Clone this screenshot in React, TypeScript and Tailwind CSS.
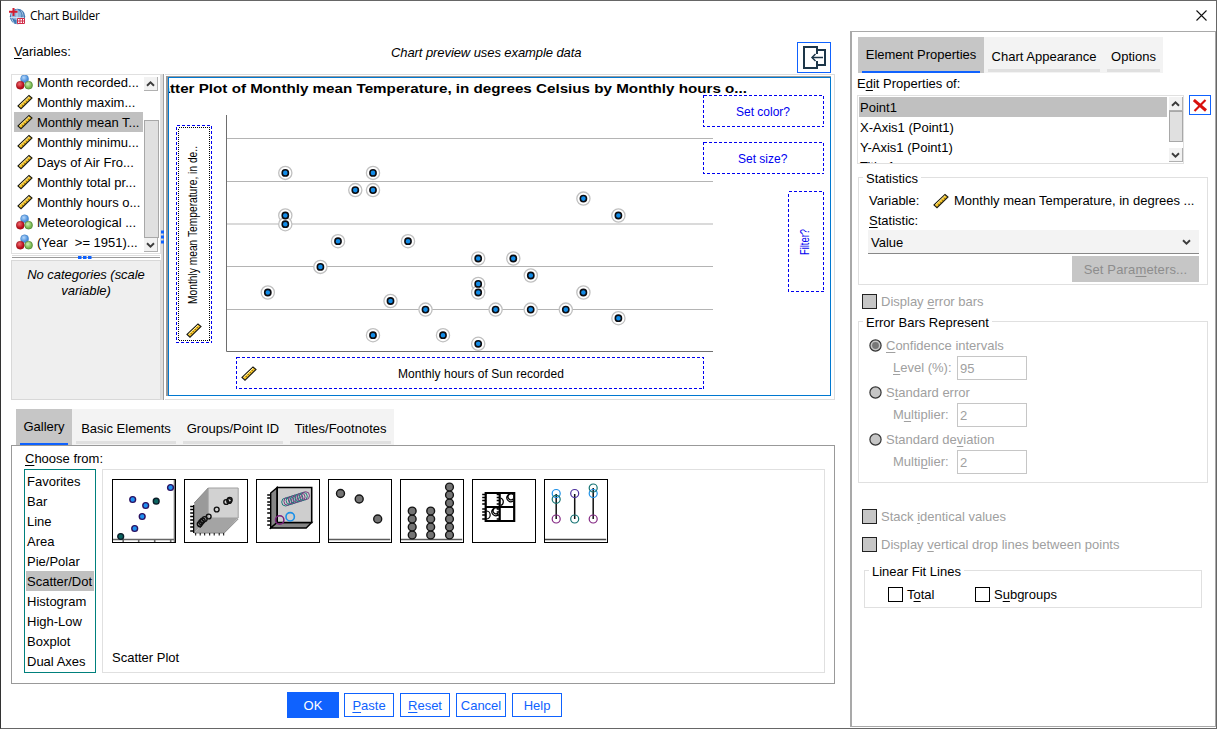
import React from "react";

const U = ({ children }: { children: React.ReactNode }) => (
  <span className="underline decoration-1 underline-offset-2">{children}</span>
);

const Ruler = () => (
  <svg width="16" height="16" viewBox="0 0 16 16" className="shrink-0">
    <path d="M1 12 L12 1.5 L15 4 L4 14.7 Z" fill="#f7c325" stroke="#1c1c14" strokeWidth="1.1" />
    <path d="M2.4 11.8 L12 2.7" stroke="#fff3b0" strokeWidth="1" />
    <path d="M5 10.800l.8.8M7 8.800l.8.8M9 6.800l.8.8M11 4.800l.8.8" stroke="#3a3208" strokeWidth="1" />
  </svg>
);

const Nominal = () => (
  <svg width="17" height="16" viewBox="0 0 17 16" className="shrink-0">
    <defs>
      <radialGradient id="nb" cx=".4" cy=".35"><stop offset="0" stopColor="#b5d8fb" /><stop offset="1" stopColor="#4a8edb" /></radialGradient>
      <radialGradient id="nr" cx=".4" cy=".35"><stop offset="0" stopColor="#f06a70" /><stop offset="1" stopColor="#b8101c" /></radialGradient>
      <radialGradient id="ng" cx=".4" cy=".35"><stop offset="0" stopColor="#d2f0b4" /><stop offset="1" stopColor="#76b84e" /></radialGradient>
    </defs>
    <circle cx="8.6" cy="4.8" r="4" fill="url(#nb)" stroke="#4580c0" strokeWidth=".5" />
    <circle cx="4.3" cy="11.2" r="4" fill="url(#nr)" stroke="#901018" strokeWidth=".5" />
    <circle cx="12.6" cy="11.2" r="3.9" fill="url(#ng)" stroke="#4f7f35" strokeWidth=".7" />
  </svg>
);

const Chevron = ({ up = false }: { up?: boolean }) => (
  <svg width="9" height="6" viewBox="0 0 9 6">
    <path d={up ? "M1 4.8 L4.5 1.4 L8 4.8" : "M1 1.2 L4.5 4.6 L8 1.2"} fill="none" stroke="#3c3c3c" strokeWidth="1.9" />
  </svg>
);

const ArrowButton = ({ up = false }: { up?: boolean }) => (
  <div className="flex h-[14px] w-[14px] shrink-0 items-center justify-center border-r border-b border-[#b0b0b0] bg-[#f2f2f2]">
    <Chevron up={up} />
  </div>
);

const variables: [string, boolean][] = [
  ["Month recorded...", true],
  ["Monthly maxim...", false],
  ["Monthly mean T...", false],
  ["Monthly minimu...", false],
  ["Days of Air Fro...", false],
  ["Monthly total pr...", false],
  ["Monthly hours o...", false],
  ["Meteorological ...", true],
  ["(Year  >= 1951)...", true],
];

const points = [
  [285.3, 173.9], [373, 173.9], [355.3, 191.1], [373, 191.1], [285.3, 216.5], [285.3, 225.2],
  [338, 242.2], [408, 242.2], [320.4, 267.9], [267.8, 293.5], [478.2, 259.5], [513.3, 259.5],
  [530.8, 276.5], [478.2, 284.9], [478.2, 293.5], [583.4, 293.5], [390.5, 302], [425.5, 310.6],
  [495.6, 310.6], [530.7, 310.6], [565.8, 310.6], [618.4, 319.2], [373, 336.200], [443, 336.200],
  [478.2, 344.8], [583.4, 199.600], [618.4, 216.500],
];

const Zone = ({ x, y, w, h }: { x: number; y: number; w: number; h: number }) => (
  <rect x={x} y={y} width={w} height={h} fill="white" stroke="#0000f0" strokeDasharray="3 2" shapeRendering="crispEdges" />
);

const RulerMark = ({ x, y }: { x: number; y: number }) => (
  <g transform={`translate(${x} ${y})`}>
    <path d="M1 12 L12 1.5 L15 4 L4 14.7 Z" fill="#f7c325" stroke="#1c1c14" strokeWidth="1.1" />
    <path d="M2.4 11.8 L12 2.7" stroke="#fff3b0" />
    <path d="M5 10.800l.8.8M7 8.800l.8.8M9 6.800l.8.8M11 4.800l.8.8" stroke="#3a3208" />
  </g>
);

const Preview = () => (
  <svg width="661" height="317" viewBox="169 79 661 317" fontSize="12" className="block">
    <text x="143" y="94" fontSize="12.5" fontWeight="bold" textLength="604" lengthAdjust="spacingAndGlyphs">
      Scatter Plot of Monthly mean Temperature, in degrees Celsius by Monthly hours o...
    </text>
    {[139.5, 182.5, 267.5, 310.5].map((y) => (
      <line key={y} x1="227" x2="713" y1={y} y2={y} stroke="#b4b4b4" />
    ))}
    <line x1="227" x2="713" y1="225" y2="225" stroke="#dadada" strokeWidth="2" />
    <path d="M226.5 116 V352.5 H713" fill="none" stroke="#6e6e6e" />
    {points.map(([x, y], i) => <circle key={i} cx={x} cy={y} r="6.6" fill="white" stroke="#c0c0c0" strokeWidth="1.3" />)}
    {points.map(([x, y], i) => <circle key={i} cx={x} cy={y} r="3.1" fill="#128ce8" stroke="#0c0c10" strokeWidth="1.6" />)}
    <Zone x={176.5} y={126.5} w={35} h={217} />
    <rect x="178.5" y="128.5" width="31" height="213" fill="none" stroke="#000" strokeDasharray="1 1" shapeRendering="crispEdges" />
    <text transform="translate(197 305) rotate(-90)" textLength="158" lengthAdjust="spacingAndGlyphs">Monthly mean Temperature, in de..</text>
    <RulerMark x={186} y={323.5} />
    <Zone x={236.5} y={358.5} w={467} h={31} />
    <RulerMark x={241} y={366.5} />
    <text x="398" y="379" textLength="166">Monthly hours of Sun recorded</text>
    <Zone x={703.5} y={96.5} w={120} h={31} />
    <Zone x={703.5} y={143.5} w={120} h={31} />
    <Zone x={788.5} y={192.5} w={35} h={100} />
    <g fill="#0000f0">
      <text x="736" y="117">Set color?</text>
      <text x="738" y="164">Set size?</text>
      <text transform="translate(809 256) rotate(-90)" textLength="26" lengthAdjust="spacingAndGlyphs">Filter?</text>
    </g>
  </svg>
);

const Dots = ({ list, r, fill, stroke }: { list: number[][]; r: number; fill: string; stroke: string }) => (
  <>{list.map(([x, y], i) => <circle key={i} cx={x} cy={y} r={r} fill={fill} stroke={stroke} strokeWidth="1.4" />)}</>
);

const thumbs = [
  <>
    <path d="M0 60.500H62M11 60v3M26.500 60v3M42.500 60v3M58.500 60v3" stroke="#666" strokeWidth="1.6" />
    <path d="M62.300 0V63" stroke="#777" strokeWidth="1.6" />
    <Dots list={[[20.500, 20.500], [33.500, 26.500], [30, 37.500], [22.500, 49.500], [58.300, 8.500]]} r={2.900} fill="#2090f0" stroke="#2a1060" />
    <Dots list={[[44, 22.200], [8.500, 57.500]]} r={2.900} fill="#0a6460" stroke="#0a1c28" />
  </>,
  <>
    <path d="M10 24L24 9V39L10 54Z" fill="#9a9a9a" />
    <path d="M10 54L24 39H54L40 54Z" fill="#a4a4a4" />
    <path d="M24 9H54V39H24Z" fill="#d2d2d2" stroke="#a0a0a0" />
    <path d="M10 24L24 9M10 54H40L54 40" stroke="#888" />
    <path d="M9.500 26V54M6 27.500h4M6 30.500h4M6 34h4M6 37.500h4M6 41h4M6 44.500h4M6 48h4M6 52h4" stroke="#000" strokeWidth="1.300" />
    <path d="M11.500 54v2.500M16 54v2.500M20.500 54v2.500M25.500 54v2.500M30 54v2.500M35 54v2.500M39.500 54v2.500" stroke="#000" />
    <Dots list={[[15.500, 45], [17, 43], [18.500, 41.500], [20.500, 40], [24.500, 37.500], [32.500, 30.500], [42, 23], [45.500, 20.800], [45, 22]]} r={2.400} fill="none" stroke="#111" />
    <path d="M14 47l2 1l3-4" fill="none" stroke="#111" strokeWidth="1.500" />
  </>,
  <>
    <path d="M14.500 14L21 8.500V43.500L14.500 49Z" fill="#858585" stroke="#000" strokeWidth="1.400" />
    <path d="M14.500 49L21 43.500H55.500L50 49Z" fill="#858585" stroke="#000" strokeWidth="1.400" />
    <path d="M21 8.500H55.500V43.500H21Z" fill="#cecece" stroke="#000" strokeWidth="1.600" />
    <path d="M11 16h3M11 19h3M11 23h3M11 26h3M11 30h3M11 34h3M11 39h3M11 42h3M11 46h3" stroke="#000" strokeWidth="1.500" />
    {[0, 1, 2, 3, 4, 5, 6, 7, 8, 9].map((i) => (
      <circle key={i} cx={29.500 + i * 2.200} cy={23 - i * 0.700} r="4" fill="none" stroke={i % 2 ? "#7b3c82" : "#1c7c7c"} />
    ))}
    <circle cx="23.500" cy="41" r="4.200" fill="none" stroke="#7a207c" strokeWidth="1.500" />
    <circle cx="34" cy="37.800" r="4.200" fill="none" stroke="#1c90e8" strokeWidth="1.600" />
  </>,
  <>
    <path d="M0 60.500H62" stroke="#5c5c5c" strokeWidth="1.600" />
    <Dots list={[[12.300, 14.500], [31, 20], [49.500, 40]]} r={4} fill="#747474" stroke="#161616" />
  </>,
  <>
    <path d="M0 60.500H62" stroke="#5c5c5c" strokeWidth="1.600" />
    <Dots list={[[12, 56], [12, 48], [12, 40], [12, 32], [30.500, 56], [30.500, 48], [30.500, 40], [30.500, 32], [49.300, 56], [49.300, 48], [49.300, 40], [49.300, 32], [49.300, 24], [49.300, 16], [49.300, 8]]} r={3.900} fill="#747474" stroke="#161616" />
  </>,
  <>
    <path d="M13.500 14H42V42H13.500ZM27.500 14V42M13.500 28H42" fill="none" stroke="#000" strokeWidth="2.200" />
    <path d="M10 15.500h4M10 18.500h4M10 21.500h4M10 25h4M10 30h4M10 33h4M10 36h4M10 40h4M24.500 15.500h3M24.500 18.500h3M24.500 21.500h3M24.500 25h3M24.500 30h3M24.500 33h3M24.500 36h3M24.500 40h3" stroke="#000" strokeWidth="1.600" />
    <path d="M28.500 19a4 4 0 0 1 0 7.500M41 15.500a4 4 0 1 0 0 6.500M39.500 15a3 3 0 1 0 1.500 5M14 32a4 4 0 0 1 0 8M26 29.500a4 4 0 1 0 0 6.500M25 29a3 3 0 1 0 1 5" fill="none" stroke="#000" strokeWidth="1.200" />
  </>,
  <>
    <path d="M0 60.500H62" stroke="#444" strokeWidth="1.600" />
    <path d="M12 15V40M30.500 15V40M49 9V40" stroke="#111" strokeWidth="1.500" />
    <g fill="none" strokeWidth="1.200">
      <circle cx="12" cy="14.500" r="4" stroke="#1c90e8" /><circle cx="12" cy="20.300" r="4" stroke="#137272" /><circle cx="12" cy="40" r="4" stroke="#822682" />
      <circle cx="30.500" cy="14.500" r="4" stroke="#4c309c" /><circle cx="30.500" cy="40" r="4" stroke="#137272" />
      <circle cx="49" cy="14.500" r="4" stroke="#1c90e8" /><circle cx="49" cy="9" r="4" stroke="#137272" /><circle cx="49" cy="40" r="4" stroke="#822682" />
    </g>
  </>,
];

const ActiveTab = ({ label, cls }: { label: string; cls: string }) => (
  <div className={`flex h-9 flex-col items-center bg-[#c6c6c6] px-1 ${cls}`}>
    <span className="pt-[9px] leading-[18px]">{label}</span>
    <span className="mt-auto h-[2px] w-full bg-[#0f62fe]" />
  </div>
);

const Tab = ({ label, cls }: { label: string; cls: string }) => (
  <div className={`flex h-9 flex-col items-center bg-[#f3f3f3] pb-[1px] ${cls}`}>
    <span className="pt-[11px] leading-[18px]">{label}</span>
    <span className="mt-auto h-[3px] w-full bg-[#e0e0e0]" />
  </div>
);

const Check = ({ disabled = false, children }: { disabled?: boolean; children: React.ReactNode }) => (
  <div className={`flex h-[15px] items-center gap-1 ${disabled ? "text-[#a0a0a0]" : ""}`}>
    <span className={`h-[15px] w-[15px] border ${disabled ? "border-[#222] bg-[#c6c6c6]" : "border-black bg-white"}`} />
    <span>{children}</span>
  </div>
);

const RadioRow = ({ on = false, label, field, value }: { on?: boolean; label: React.ReactNode; field: React.ReactNode; value: string }) => (
  <div className="h-[47px] pl-[10px]">
    <div className="flex h-4 items-center gap-1">
      <svg width="13" height="13" viewBox="0 0 13 13">
        <circle cx="6.5" cy="6.5" r="5.6" fill="#c6c6c6" stroke="#333" strokeWidth="1.2" />
        {on && <circle cx="6.5" cy="6.5" r="3.4" fill="#777" />}
      </svg>
      <span className="pt-px">{label}</span>
    </div>
    <div className="mt-[3px] flex h-6 items-center pl-6">
      <span className="w-16">{field}</span>
      <span className="flex h-6 w-[70px] items-center border border-[#c6c6c6] pt-px pl-[2px]">{value}</span>
    </div>
  </div>
);

const Legend = ({ children }: { children: React.ReactNode }) => (
  <div className="-mt-2 ml-1 w-fit bg-white px-[3px] leading-[18px]">{children}</div>
);

const LeftSide = () => (
  <div className="flex w-[849px] flex-col">
    <div className="flex h-[43px] items-start pl-[13px]">
      <span className="w-[377px] pt-[13px] leading-4"><U>V</U>ariables:</span>
      <span className="w-[406px] pt-[14px] leading-4 tracking-[-0.08px] italic">Chart preview uses example data</span>
      <span className="mt-[11px] flex h-[31px] w-[34px] items-center justify-center border border-[#0f62fe]">
        <svg width="23" height="23" viewBox="0 0 23 23" fill="none" stroke="#1d3649" strokeWidth="2">
          <path d="M14 8V1H1V22H14V15" />
          <path d="M14 4H22V19H14" />
          <path d="M20 11.500H9" strokeWidth="1.500" />
          <path d="M12.500 8L9 11.500L12.500 15" strokeWidth="1.500" />
        </svg>
      </span>
    </div>
    <div className="flex h-[327px] pl-[10px]">
      <div className="w-[150px]">
        <div className="flex h-[180px] overflow-hidden border border-[#e0e0e0] pl-[2px]">
          <div className="-mt-[3px] w-[129px] shrink-0">
            {variables.map(([name, nominal], i) => (
              <div key={name} className={`flex h-5 items-center whitespace-pre ${i === 2 ? "bg-[#c0c0c0]" : ""}`}>
                <span className="flex w-[23px] justify-center pr-[2px]">{nominal ? <Nominal /> : <Ruler />}</span>
                <span className="pt-[2px]">{name}</span>
              </div>
            ))}
          </div>
          <div className="ml-px flex w-[15px] flex-col bg-white pt-[2px]">
            <ArrowButton up />
            <div className="mt-[29px] h-[118px] border border-[#a8a8a8] bg-[#e0e0e0]" />
            <ArrowButton />
          </div>
        </div>
        <div className="flex h-[6px] items-center justify-center">
          <svg width="150" height="5"><path d="M1 .500H149" stroke="#ddd" /><path d="M1 2.500H149" stroke="#999" /><path d="M67 2.500h3.500m1.500 0h3.500m1.500 0h3.500" stroke="#0f62fe" strokeWidth="3" /></svg>
        </div>
        <div className="h-[140px] border border-[#d8d8d8] bg-[#efefef] pt-[6px] text-center leading-4 tracking-[-0.05px] italic">
          No categories (scale<br />variable)
        </div>
      </div>
      <svg width="4" height="326" className="shrink-0"><path d="M1 0V326" stroke="#ddd" strokeWidth="2" /><path d="M2.500 0V326" stroke="#a0a0a0" /><path d="M1.500 156.500v3m0 2v3m0 2v3" stroke="#0f62fe" strokeWidth="3" /></svg>
      <div className="h-[326px] w-[670px] border border-l-0 border-[#ddd]">
        <div className="mt-px ml-[1px] h-[320px] w-[665px] border-t border-l-2 border-[#999]">
          <div className="h-[319px] w-[663px] overflow-hidden border border-[#0078d0]"><Preview /></div>
        </div>
      </div>
    </div>
    <div className="mt-2 ml-[15px] flex h-9">
      <ActiveTab label="Gallery" cls="w-14" />
      <div className="flex gap-[7px] bg-[#f3f3f3] pr-[3px] pl-1">
        <Tab label="Basic Elements" cls="w-[100px]" />
        <Tab label="Groups/Point ID" cls="w-[100px]" />
        <Tab label="Titles/Footnotes" cls="w-[101px]" />
      </div>
    </div>
    <div className="ml-[10px] h-[239px] w-[824px] border border-[#999] pt-[3px] pl-3">
      <div className="h-5 pl-[1px] leading-[19px]"><U>C</U>hoose from:</div>
      <div className="flex gap-[6px]">
        <div className="h-[204px] w-[72px] border border-[#00807c] py-px pr-px">
          {["Favorites", "Bar", "Line", "Area", "Pie/Polar", "Scatter/Dot", "Histogram", "High-Low", "Boxplot", "Dual Axes"].map((n) => (
            <div key={n} className={`ml-px h-5 pt-px pl-px leading-5 whitespace-nowrap ${n === "Scatter/Dot" ? "bg-[#c0c0c0]" : ""}`}>{n}</div>
          ))}
        </div>
        <div className="flex h-[204px] w-[723px] flex-col border border-[#e0e0e0] pt-[9px] pb-[5px] pl-[9px]">
          <div className="flex gap-2">
            {thumbs.map((g, i) => (
              <div key={i} className="h-16 w-16 border border-black"><svg width="62" height="62" viewBox="0.8 1 62 62" fill="none">{g}</svg></div>
            ))}
          </div>
          <div className="mt-auto leading-[18px]">Scatter Plot</div>
        </div>
      </div>
    </div>
    <div className="mt-2 ml-[286px] flex">
      <button className="mr-[5px] h-[26px] w-[52px] bg-[#0f62fe] pt-px text-white">OK</button>
      <div className="flex gap-[6px] pt-px text-[#0f62fe]">
        <button className="h-6 w-[50px] border border-[#0f62fe] pt-px"><U>P</U>aste</button>
        <button className="h-6 w-[50px] border border-[#0f62fe] pt-px"><U>R</U>eset</button>
        <button className="h-6 w-[50px] border border-[#0f62fe] pt-px">Cancel</button>
        <button className="h-6 w-[50px] border border-[#0f62fe] pt-px">Help</button>
      </div>
    </div>
  </div>
);

const RightSide = () => (
  <div className="h-[696px] w-[366px] border border-l-2 border-[#a9a9a9] pl-[5px]">
    <div className="mt-[5px] ml-px flex h-9">
      <ActiveTab label="Element Properties" cls="w-[126px]" />
      <div className="flex gap-[7px] bg-[#f3f3f3] pr-[3px] pl-1">
        <Tab label="Chart Appearance" cls="w-[112px]" />
        <Tab label="Options" cls="w-[53px]" />
      </div>
    </div>
    <div className="mt-[2px] leading-[18px]">E<U>d</U>it Properties of:</div>
    <div className="mt-[2px] flex gap-[5px]">
      <div className="flex h-[69px] w-[327px] overflow-hidden border border-[#e0e0e0] pt-px pl-px">
        <div className="h-[66px] w-[308px] overflow-hidden leading-5">
          <div className="h-5 bg-[#c0c0c0] pt-px pl-px">Point1</div>
          <div className="h-5 pt-px pl-px">X-Axis1 (Point1)</div>
          <div className="h-5 pt-px pl-px">Y-Axis1 (Point1)</div>
          <div className="h-[6px] overflow-hidden pl-px leading-5">Title 1</div>
        </div>
        <div className="ml-[2px] flex w-[14px] flex-col pb-px">
          <ArrowButton up />
          <div className="mb-auto h-[31px] border border-[#a8a8a8] bg-[#e0e0e0]" />
          <ArrowButton />
        </div>
      </div>
      <div className="flex h-5 w-[22px] items-center justify-center border border-[#0f62fe]">
        <svg width="14" height="13" viewBox="0 0 14 13" stroke="#d8100c"><path d="M.8 1L13 11.500" strokeWidth="3" /><path d="M12.500 1L1.500 12" strokeWidth="2.200" /></svg>
      </div>
    </div>
    <div className="mt-[13px] ml-px h-[108px] w-[350px] border border-[#e0e0e0]">
      <Legend>Statistics</Legend>
      <div className="mt-[3px] flex h-5 items-center pl-[10px]">
        <span className="w-16">Variable:</span><Ruler /><span className="pl-[5px] whitespace-nowrap">Monthly mean Temperature, in degrees ...</span>
      </div>
      <div className="h-[19px] pl-[10px] leading-5"><U>S</U>tatistic:</div>
      <div className="ml-[9px] flex h-6 w-[331px] items-center justify-between border-b border-[#888] bg-[#f3f3f3] pr-2 pl-[3px]">
        <span className="pt-[2px]">Value</span><Chevron />
      </div>
      <div className="mt-[2px] ml-[213px] flex h-[26px] w-[127px] items-center justify-center bg-[#c6c6c6] text-[#8d8d8d]"><span className="pt-px tracking-[0.15px]">Set Para<U>m</U>eters...</span></div>
    </div>
    <div className="mt-[9px] ml-[5px]"><Check disabled>Display <U>e</U>rror bars</Check></div>
    <div className="mt-3 ml-px h-[162px] w-[350px] border border-[#e0e0e0]">
      <Legend>Error Bars Represent</Legend>
      <div className="mt-[5px] text-[#a0a0a0]">
        <RadioRow on label={<><U>C</U>onfidence intervals</>} field={<><U>L</U>evel (%):</>} value="95" />
        <RadioRow label={<>S<U>t</U>andard error</>} field={<>M<U>u</U>ltiplier:</>} value="2" />
        <RadioRow label={<>Standard de<U>v</U>iation</>} field={<>Multi<U>p</U>lier:</>} value="2" />
      </div>
    </div>
    <div className="mt-[26px] ml-[5px] flex flex-col gap-[13px]">
      <Check disabled>Stack <U>i</U>dentical values</Check>
      <Check disabled>Display <U>v</U>ertical drop lines between points</Check>
    </div>
    <div className="mt-[18px] ml-[7px] h-[38px] w-[338px] border border-[#e0e0e0]">
      <Legend>Linear Fit Lines</Legend>
      <div className="mt-[6px] flex pl-[23px]">
        <div className="w-[87px]"><Check>T<U>o</U>tal</Check></div>
        <Check>S<U>u</U>bgroups</Check>
      </div>
    </div>
  </div>
);

export default function App() {
  return (
    <div className="h-[729px] w-[1217px] overflow-hidden border border-[#666] border-l-[#333] bg-white font-['Liberation_Sans',Arial,sans-serif] text-[13px] leading-4 text-black">
      <div className="flex h-[30px] items-center pl-2">
        <svg width="17" height="17" viewBox="0 0 17 17">
          <circle cx="8.500" cy="8.500" r="7.700" fill="#3f78b4" />
          <circle cx="7.500" cy="7" r="5" fill="#8db4da" />
          <path d="M8 1V16M1 9.500H15M4 2.500C2 7 2 11 5 15M12 2.500C14.500 6 14.500 9 13.500 12" fill="none" stroke="#e4eef8" strokeWidth=".7" />
          <path d="M4.500 0V8M0 3.700H8.500" stroke="#d41c30" strokeWidth="2" />
          <path d="M8.500 10.500H15.500V15.500H8.500Z" fill="#fff" stroke="#d02c48" />
          <path d="M8 13H16M11 10V16M13.500 10V16" stroke="#d02c48" />
        </svg>
        <span className="pl-[4px] font-['Open_Sans',sans-serif] text-[12px] leading-4 tracking-[-0.35px]">Chart Builder</span>
        <svg width="11" height="11" viewBox="0 0 11 11" className="mr-[9px] mb-px ml-auto"><path d="M.5 .5L10.500 10.500M10.500 .5L.5 10.500" stroke="#111" strokeWidth="1.100" /></svg>
      </div>
      <div className="flex"><LeftSide /><RightSide /></div>
    </div>
  );
}
